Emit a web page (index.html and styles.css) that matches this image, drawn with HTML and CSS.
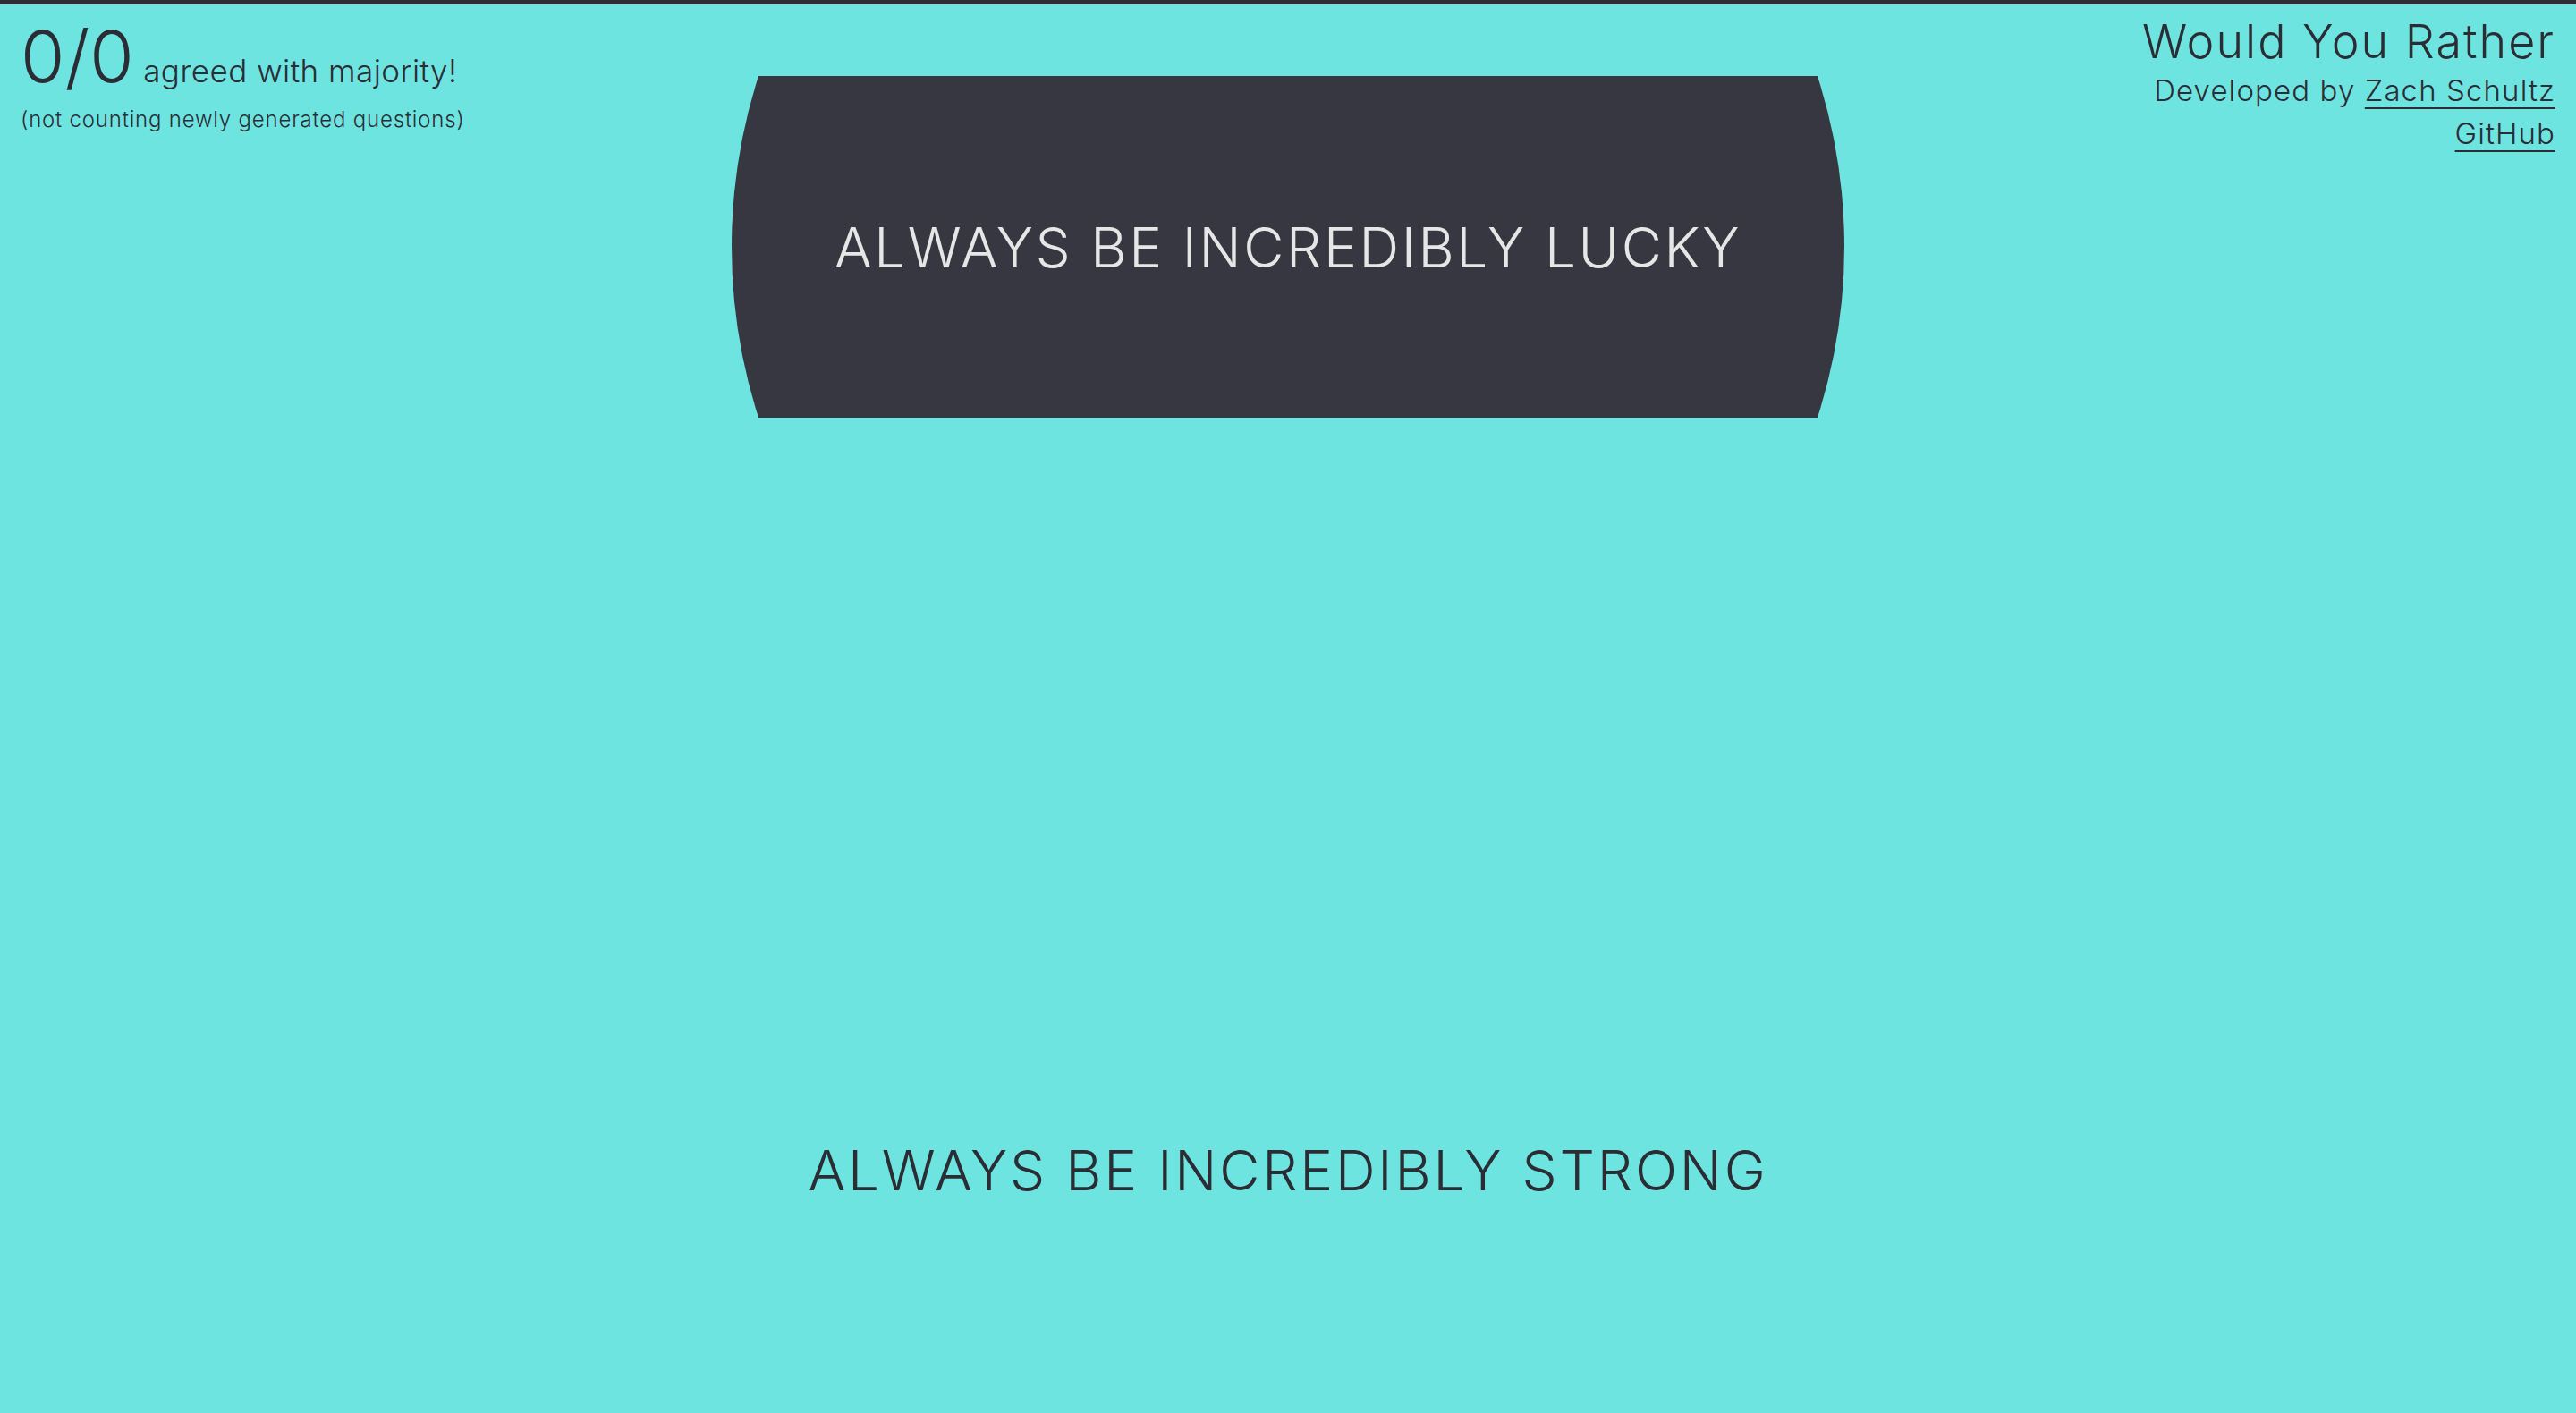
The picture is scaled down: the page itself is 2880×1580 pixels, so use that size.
FILE: index.html
```html
<!DOCTYPE html>
<html lang="en">
<head>
<meta charset="utf-8">
<title>Would You Rather</title>
<link rel="stylesheet" href="styles.css">
</head>
<body>
<div class="page">
  <header class="top-row">
    <section class="stats">
      <p class="score"><span class="score-num">0/0</span> <span class="score-label">agreed with majority!</span></p>
      <p class="score-note">(not counting newly generated questions)</p>
    </section>
    <div class="option-a-wrap">
      <button class="option-a"><span>ALWAYS BE INCREDIBLY LUCKY</span></button>
    </div>
    <section class="credits">
      <h1 class="title">Would You Rather</h1>
      <p class="dev">Developed by <a href="#">Zach Schultz</a></p>
      <p class="dev"><a href="#">GitHub</a></p>
    </section>
  </header>
  <main class="option-b">
    <span>ALWAYS BE INCREDIBLY STRONG</span>
  </main>
</div>
</body>
</html>
```

FILE: styles.css
```css
html, body {
  margin: 0;
  padding: 0;
  height: 100%;
}
body {
  background: #6ee4e1;
  border-top: 5px solid #2e2c35;
  box-sizing: border-box;
  font-family: Inter, "Open Sans", sans-serif;
  font-weight: 300;
  color: #2b2d35;
  overflow: hidden;
}
.page {
  display: flex;
  flex-direction: column;
  height: 100%;
}
.top-row {
  display: grid;
  grid-template-columns: 1fr auto 1fr;
  align-items: start;
  padding: 0 23px;
}
.stats {
  justify-self: start;
}
.score {
  margin: 0;
  padding-top: 18px;
  line-height: 80px;
  white-space: nowrap;
}
.score-num {
  font-size: 80px;
  margin-right: 6px;
}
.score-label {
  font-size: 35px;
  letter-spacing: 0.45px;
}
.score-note {
  margin: -6px 0 0;
  font-size: 24px;
  letter-spacing: 0.8px;
  line-height: 28px;
  white-space: nowrap;
}
.option-a-wrap {
  margin-top: 80px;
  width: 1244px;
  height: 382px;
  overflow: hidden;
  display: flex;
  align-items: center;
  justify-content: center;
}
.option-a {
  flex: 0 0 auto;
  width: 1244px;
  height: 1244px;
  border-radius: 50%;
  background: #373741;
  border: 0;
  padding: 0;
  display: flex;
  align-items: center;
  justify-content: center;
  font-family: inherit;
  font-weight: 300;
  font-size: 62px;
  letter-spacing: 2.6px;
  color: #e6e6e6;
  cursor: pointer;
}
.credits {
  justify-self: end;
  text-align: right;
  padding-top: 12px;
}
.title {
  margin: 0;
  font-size: 52px;
  font-weight: 300;
  letter-spacing: 2px;
  line-height: 60px;
  white-space: nowrap;
}
.dev {
  margin: 0;
  font-size: 33px;
  letter-spacing: 1.1px;
  line-height: 48px;
  white-space: nowrap;
}
.dev a {
  color: inherit;
  text-decoration: underline;
  text-underline-offset: 7px;
  text-decoration-thickness: 2px;
}
.option-b {
  display: flex;
  justify-content: center;
  padding-top: 810px;
  font-size: 62px;
  letter-spacing: 2.8px;
  line-height: 64px;
}
```
